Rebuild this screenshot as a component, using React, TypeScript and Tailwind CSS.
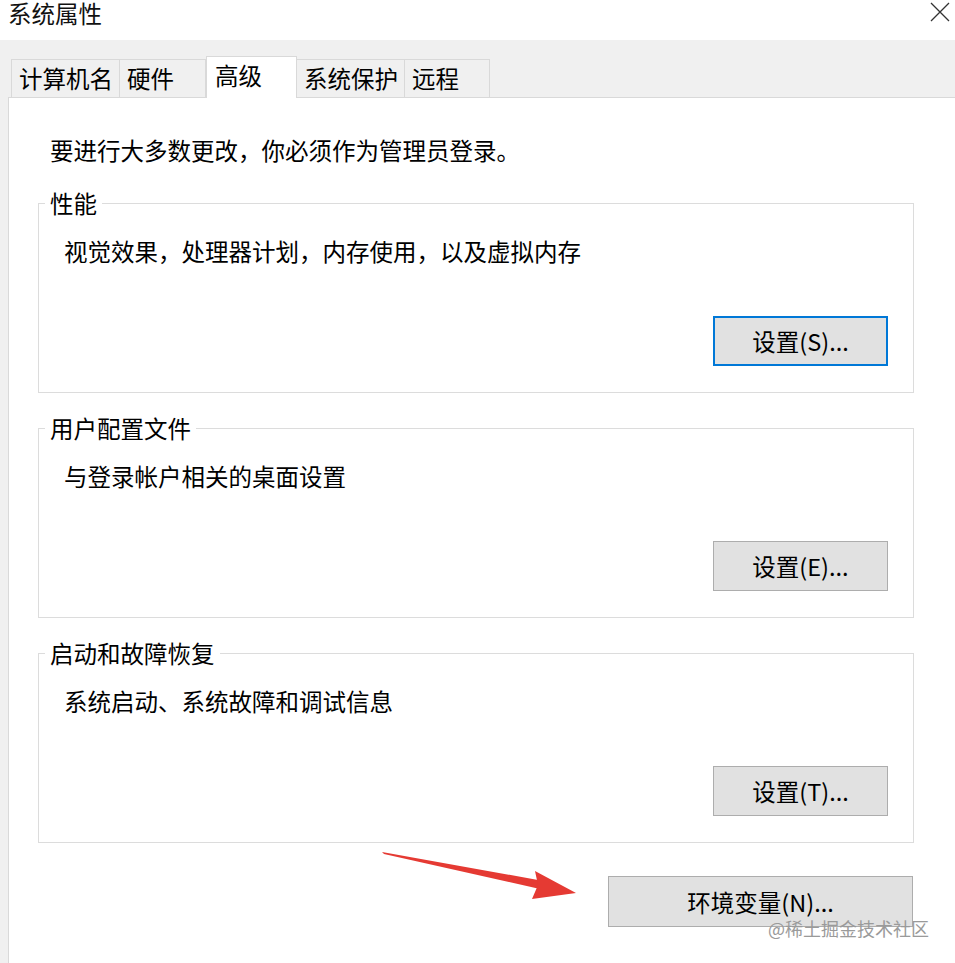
import React from "react";

const FONT = '"Noto Sans CJK SC", "Noto Sans", sans-serif';

function Tab({ label, width, selected }: { label: string; width: number; selected?: boolean }) {
  if (selected) {
    return (
      <div
        className="relative z-10 -mb-px h-[42px] bg-white border-l border-t border-r border-[#d9d9d9] pl-[8px] leading-[36px]"
        style={{ width }}
      >
        {label}
      </div>
    );
  }
  return (
    <div
      className="h-[38px] bg-[#f0f0f0] border-l border-t border-r border-[#d9d9d9] -ml-px first:ml-0 pl-[7px] leading-[37px]"
      style={{ width }}
    >
      {label}
    </div>
  );
}

function Group({
  title,
  desc,
  button,
  focused,
  className,
}: {
  title: string;
  desc: string;
  button: string;
  focused?: boolean;
  className?: string;
}) {
  return (
    <div className={"relative border border-[#dcdcdc] h-[190px] flex flex-col " + (className ?? "")}>
      <span className="absolute -top-[17px] left-[6px] bg-white px-[5px] leading-[32px]">{title}</span>
      <div className="pl-[25px] pt-[31px] leading-[32px]">{desc}</div>
      <div className="flex justify-end pr-[25px] mt-[49px]">
        {focused ? (
          <div className="w-[175px] h-[50px] bg-[#e1e1e1] border-2 border-[#0078d7] flex items-center justify-center leading-[32px]">
            {button}
          </div>
        ) : (
          <div className="w-[175px] h-[50px] bg-[#e1e1e1] border border-[#adadad] flex items-center justify-center leading-[32px]">
            {button}
          </div>
        )}
      </div>
    </div>
  );
}

export default function App() {
  return (
    <div
      className="relative w-[955px] h-[963px] bg-white overflow-hidden text-[23.5px] text-[#000]"
      style={{ fontFamily: FONT }}
    >
      {/* title bar */}
      <div className="h-[40px] flex items-start justify-between pl-[8px] pr-[4px]">
        <span className="leading-[26px] text-[#111]">系统属性</span>
        <svg width="22" height="22" viewBox="0 0 22 22" className="mt-[1px]">
          <path d="M2 2 L20 20 M20 2 L2 20" stroke="#333" strokeWidth="1.3" fill="none" />
        </svg>
      </div>

      {/* body */}
      <div className="h-[923px] bg-[#f0f0f0] pl-[8px] flex flex-col">
        <div className="h-[57px] flex items-end pl-[3px]">
          <Tab label="计算机名" width={109} />
          <Tab label="硬件" width={87} />
          <Tab label="高级" width={91} selected />
          <Tab label="系统保护" width={109} />
          <Tab label="远程" width={86} />
        </div>

        <div className="flex-1 bg-white border-l border-t border-[#d9d9d9] pl-[29px] pr-[41px] flex flex-col">
          <div className="pt-[36px] pl-[12px] leading-[32px]">要进行大多数更改，你必须作为管理员登录。</div>

          <Group
            className="mt-[37px]"
            title="性能"
            desc="视觉效果，处理器计划，内存使用，以及虚拟内存"
            button="设置(S)..."
            focused
          />
          <Group
            className="mt-[35px]"
            title="用户配置文件"
            desc="与登录帐户相关的桌面设置"
            button="设置(E)..."
          />
          <Group
            className="mt-[35px]"
            title="启动和故障恢复"
            desc="系统启动、系统故障和调试信息"
            button="设置(T)..."
          />

          <div className="flex justify-end mt-[33px] pr-[1px]">
            <div className="w-[305px] h-[51px] bg-[#e1e1e1] border border-[#adadad] flex items-center justify-center leading-[32px]">
              环境变量(N)...
            </div>
          </div>
        </div>
      </div>

      {/* red arrow annotation */}
      <svg className="absolute left-0 top-0 pointer-events-none" width="955" height="963" viewBox="0 0 955 963">
        <polygon points="382,852 384,854 540,889 538,880" fill="#e53a33" />
        <polygon points="576,893 532,899 538,885 535,871" fill="#e53a33" />
      </svg>

      {/* watermark */}
      <div className="absolute left-[768px] top-[915px] text-[18px] leading-[26px] text-[#9a9a9a] whitespace-nowrap">
        @稀土掘金技术社区
      </div>
    </div>
  );
}
